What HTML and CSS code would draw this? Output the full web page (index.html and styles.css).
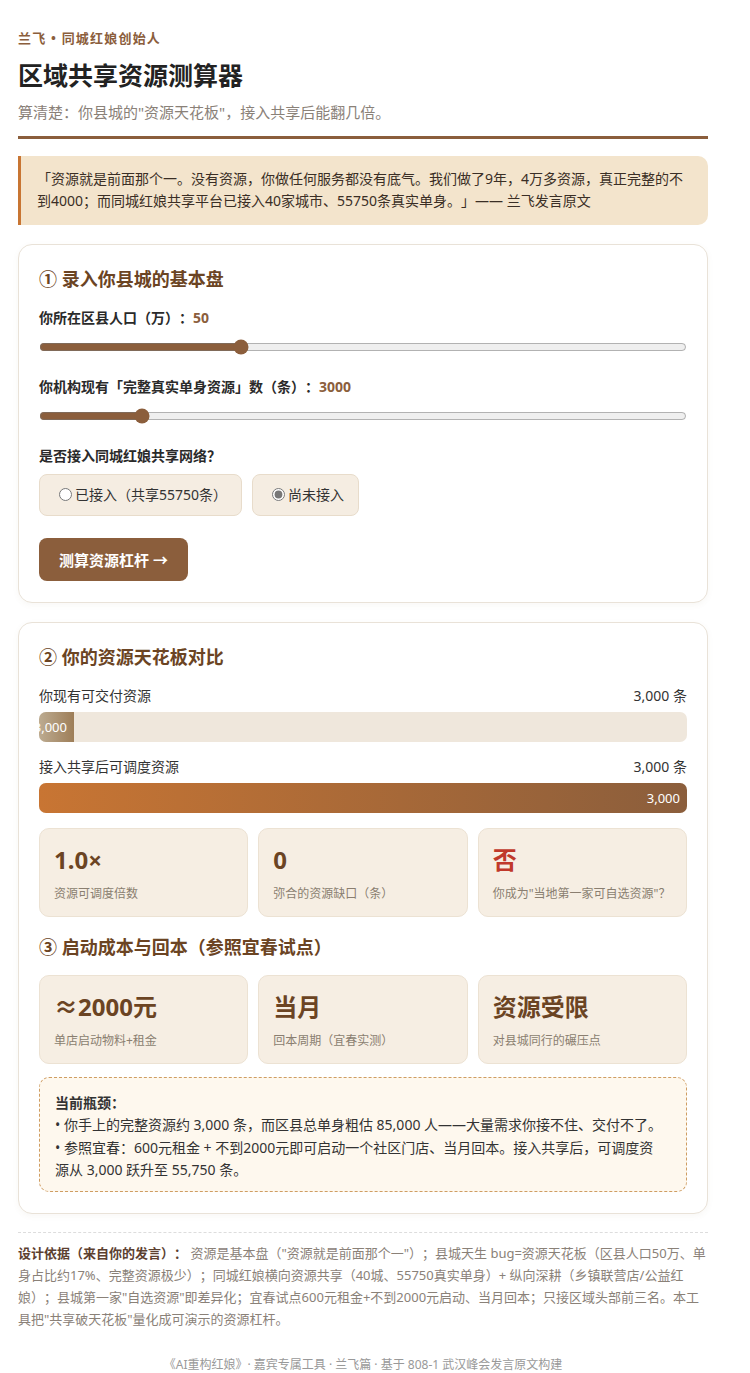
FILE: index.html
```html
<!DOCTYPE html>
<html lang="zh-CN">
	<head>
		<meta charset="UTF-8">
		<title>区域共享资源测算器</title>
		<link rel="stylesheet" href="styles.css">
	</head>

	<body>
		<div class="page">
			<header class="top">
				<div class="tag">兰飞 • 同城红娘创始人</div>
				<h1>区域共享资源测算器</h1>
				<p class="sub">算清楚：你县城的"资源天花板"，接入共享后能翻几倍。</p>
			</header>

			<blockquote class="quote">「资源就是前面那个一。没有资源，你做任何服务都没有底气。我们做了9年，4万多资源，真正完整的不到4000；而同城红娘共享平台已接入40家城市、55750条真实单身。」—— 兰飞发言原文</blockquote>

			<!-- 输入区 -->
			<section class="card">
				<h2>① 录入你县城的基本盘</h2>

				<div class="field">
					<label class="lbl">你所在区县人口（万）：<span class="val">50</span></label>
					<input class="range" type="range" min="10" max="140" value="50">
				</div>

				<div class="field">
					<label class="lbl">你机构现有「完整真实单身资源」数（条）：<span class="val">3000</span></label>
					<input class="range" type="range" min="0" max="20000" step="100" value="3000">
				</div>

				<div class="field">
					<label class="lbl">是否接入同城红娘共享网络？</label>
					<div class="opts">
						<label class="opt"><input type="radio" name="net">已接入（共享55750条）</label>
						<label class="opt"><input type="radio" name="net" checked>尚未接入</label>
					</div>
				</div>

				<button class="btn">测算资源杠杆 →</button>
			</section>

			<!-- 结果区 -->
			<section class="card">
				<h2>② 你的资源天花板对比</h2>

				<div class="bar-row">
					<span>你现有可交付资源</span>
					<span>3,000 条</span>
				</div>
				<div class="bar">
					<div class="fill fill-own" style="width: 5.4%">3,000</div>
				</div>

				<div class="bar-row">
					<span>接入共享后可调度资源</span>
					<span>3,000 条</span>
				</div>
				<div class="bar">
					<div class="fill fill-share" style="width: 100%">3,000</div>
				</div>

				<div class="stats">
					<div class="stat">
						<div class="num">1.0×</div>
						<div class="cap">资源可调度倍数</div>
					</div>
					<div class="stat">
						<div class="num">0</div>
						<div class="cap">弥合的资源缺口（条）</div>
					</div>
					<div class="stat">
						<div class="num no">否</div>
						<div class="cap">你成为"当地第一家可自选资源"？</div>
					</div>
				</div>

				<h2 class="h-sub">③ 启动成本与回本（参照宜春试点）</h2>

				<div class="stats">
					<div class="stat">
						<div class="num">≈2000元</div>
						<div class="cap">单店启动物料+租金</div>
					</div>
					<div class="stat">
						<div class="num">当月</div>
						<div class="cap">回本周期（宜春实测）</div>
					</div>
					<div class="stat">
						<div class="num">资源受限</div>
						<div class="cap">对县城同行的碾压点</div>
					</div>
				</div>

				<div class="note">
					<div class="note-title">当前瓶颈：</div>
					<div>• 你手上的完整资源约 3,000 条，而区县总单身粗估 85,000 人——大量需求你接不住、交付不了。</div>
					<div>• 参照宜春：600元租金 + 不到2000元即可启动一个社区门店、当月回本。接入共享后，可调度资源从 3,000 跃升至 55,750 条。</div>
				</div>
			</section>

			<p class="basis"><b>设计依据（来自你的发言）：</b> 资源是基本盘（"资源就是前面那个一"）；县城天生 bug=资源天花板（区县人口50万、单身占比约17%、完整资源极少）；同城红娘横向资源共享（40城、55750真实单身）+ 纵向深耕（乡镇联营店/公益红娘）；县城第一家"自选资源"即差异化；宜春试点600元租金+不到2000元启动、当月回本；只接区域头部前三名。本工具把"共享破天花板"量化成可演示的资源杠杆。</p>

			<footer class="foot">《AI重构红娘》· 嘉宾专属工具 · 兰飞篇 · 基于 808-1 武汉峰会发言原文构建</footer>
		</div>
	</body>
</html>
```

FILE: styles.css
```css
*{
	margin: 0;
	padding: 0;
	box-sizing: border-box;
}
body{
	background: #fff;
	color: #2a2a2a;
	font-family: "Noto Sans", "Noto Sans CJK SC", sans-serif;
	text-spacing-trim: space-all;
}
.page{
	width: 726px;
	padding: 28px 18px 30px;
}

/* 顶部标题 */
.top{
	padding-bottom: 13px;
	border-bottom: 3px solid #8b5e3c;
}
.tag{
	font-size: 13px;
	line-height: 20px;
	letter-spacing: 1.2px;
	font-weight: bold;
	color: #8b5e3c;
}
.top h1{
	margin-top: 11px;
	font-size: 25px;
	line-height: 32px;
	color: #222;
}
.sub{
	margin-top: 10px;
	font-size: 15px;
	line-height: 22px;
	color: #8a8178;
}

.quote{
	margin-top: 17px;
	padding: 12px 16px;
	background: #f3e4cc;
	border-left: 3px solid #c87533;
	border-radius: 0 10px 10px 0;
	font-size: 14px;
	line-height: 1.6;
	color: #3a2e25;
}

/* 卡片 */
.card{
	margin-top: 19px;
	padding: 22px 20px 21px;
	background: #fff;
	border: 1px solid #e9e2d8;
	border-radius: 14px;
	box-shadow: 0 2px 6px rgba(120, 90, 60, 0.05);
}
.card h2{
	font-size: 18px;
	line-height: 25px;
	color: #6b4423;
	margin-bottom: 16px;
}
.card .h-sub{
	margin-top: 18px;
	margin-bottom: 15px;
}

.field{
	margin-bottom: 22px;
}
.lbl{
	display: block;
	font-size: 14px;
	line-height: 20px;
	font-weight: bold;
	color: #2a2a2a;
}
.val{
	color: #8b5e3c;
}
.range{
	display: block;
	width: 100%;
	height: 16px;
	margin: 11px 0 0;
	accent-color: #8b5e3c;
}

.opts{
	display: flex;
	gap: 10px;
	margin-top: 8px;
}
.opt{
	display: flex;
	align-items: center;
	padding: 10px 14px;
	font-size: 14px;
	line-height: 20px;
	color: #333;
	background: #f5ede2;
	border: 1px solid #e8dccb;
	border-radius: 8px;
}
.opt input{
	margin: 0 3px 0 5px;
	accent-color: #777;
}

.btn{
	height: 43px;
	padding: 0 20px;
	border: none;
	border-radius: 8px;
	background: #8b5e3c;
	color: #fff;
	font-family: inherit;
	font-size: 15px;
	font-weight: bold;
}

/* 资源对比条 */
.bar-row{
	display: flex;
	justify-content: space-between;
	font-size: 14px;
	line-height: 20px;
	color: #333;
}
.bar{
	height: 30px;
	margin: 6px 0 15px;
	background: #efe7dc;
	border-radius: 7px;
	overflow: hidden;
}
.fill{
	height: 100%;
	display: flex;
	align-items: center;
	justify-content: flex-end;
	padding-right: 7px;
	overflow: hidden;
	white-space: nowrap;
	font-size: 13px;
	color: #fff;
}
.fill-own{
	background: linear-gradient(90deg, #bcab91, #9e7e58);
}
.fill-share{
	background: linear-gradient(90deg, #c87533, #8b5e3c);
}

/* 指标小卡 */
.stats{
	display: grid;
	grid-template-columns: repeat(3, 1fr);
	gap: 10px;
	margin-top: 2px;
}
.stat{
	height: 89px;
	padding: 16px 14px 0;
	background: #f6eee3;
	border: 1px solid #ece2d3;
	border-radius: 10px;
}
.num{
	font-size: 24px;
	line-height: 29px;
	font-weight: bold;
	color: #6b4423;
}
.num.no{
	color: #c0392b;
}
.cap{
	margin-top: 11px;
	font-size: 12px;
	line-height: 18px;
	white-space: nowrap;
	color: #8a7e70;
}

.note{
	margin-top: 13px;
	padding: 14px 19px 10px 15px;
	background: #fef8ee;
	border: 1px dashed #cf9d62;
	border-radius: 10px;
	font-size: 14px;
	line-height: 1.6;
	color: #333;
}
.note-title{
	font-weight: bold;
}

/* 底部说明 */
.basis{
	margin-top: 18px;
	padding-top: 9px;
	border-top: 1px dashed #ddd;
	font-size: 13px;
	line-height: 22px;
	color: #8a8178;
}
.basis b{
	color: #5c4030;
}
.foot{
	margin-top: 26px;
	text-align: center;
	font-size: 12px;
	line-height: 18px;
	color: #999;
}
```
